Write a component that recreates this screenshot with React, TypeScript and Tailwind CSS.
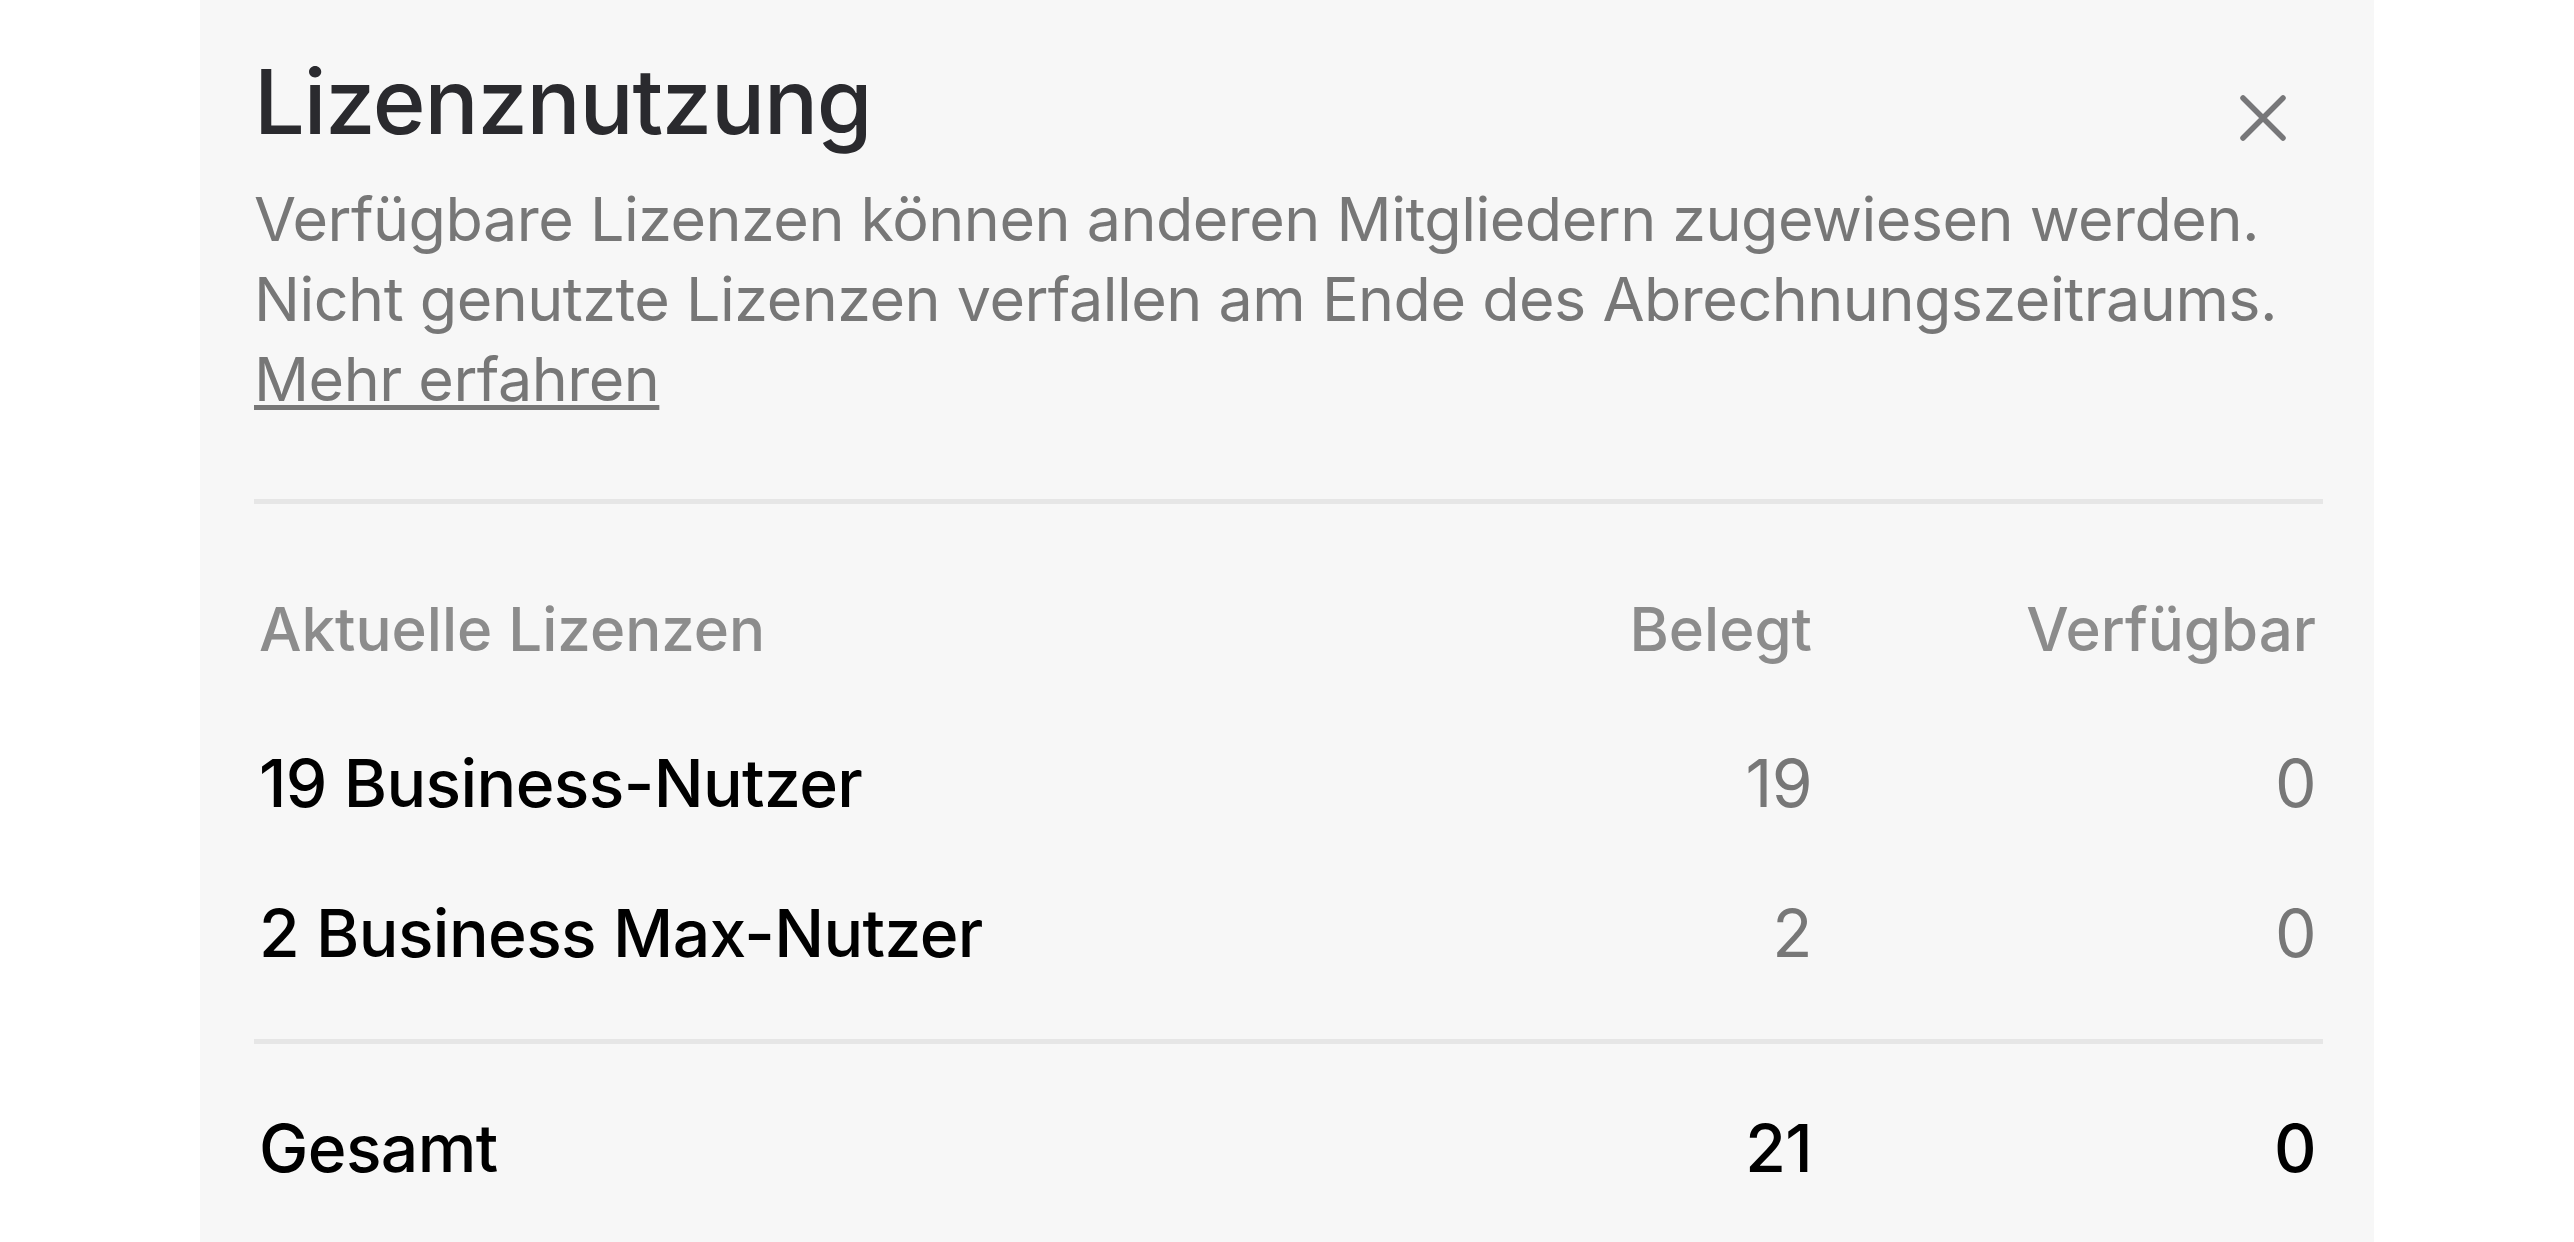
import React from 'react';

const rows = [
  { label: '19 Business-Nutzer', used: '19', free: '0' },
  { label: '2 Business Max-Nutzer', used: '2', free: '0' },
];

const CloseIcon: React.FC = () => (
  <svg width="46" height="46" viewBox="0 0 46 46" fill="none">
    <path d="M3 3L43 43M43 3L3 43" stroke="#777779" strokeWidth="5.5" strokeLinecap="round" />
  </svg>
);

const App: React.FC = () => {
  return (
    <div className="w-[2574px] h-[1242px] overflow-hidden bg-white font-['Inter',sans-serif]">
      <div className="ml-[200px] w-[2174px] h-full bg-[#f7f7f7] pt-[47px] pl-[54px] pr-[51px]">
        <div className="flex items-start justify-between">
          <h1 className="text-[90px] leading-[110px] font-medium text-[#2a2a2e] tracking-[-1.2px]">
            Lizenznutzung
          </h1>
          <button className="mt-[48px] mr-[37px]">
            <CloseIcon />
          </button>
        </div>

        <p className="mt-[22px] text-[61px] leading-[80px] text-[#777777] tracking-[-0.5px] whitespace-nowrap">
          Verfügbare Lizenzen können anderen Mitgliedern zugewiesen werden.
          <br />
          Nicht genutzte Lizenzen verfallen am Ende des Abrechnungszeitraums.
          <br />
          <a className="underline decoration-[5px] underline-offset-[4px]">Mehr erfahren</a>
        </p>

        <div className="mt-[80px] h-[5px] bg-[#e6e6e6]" />

        <div className="pl-[5px] pr-[7px]">
          <div className="mt-[84px] flex text-[60px] leading-[82px] font-medium text-[#8c8c8c]">
            <div className="flex-1">Aktuelle Lizenzen</div>
            <div className="text-right">Belegt</div>
            <div className="w-[504px] text-right">Verfügbar</div>
          </div>

          {rows.map((r, i) => (
            <div
              key={r.label}
              className={`flex text-[66px] leading-[82px] tracking-[-0.6px] ${i === 0 ? 'mt-[72px]' : 'mt-[68px]'}`}
            >
              <div className="flex-1 font-medium text-black">{r.label}</div>
              <div className="text-right text-[#777777]">{r.used}</div>
              <div className="w-[504px] text-right text-[#777777]">{r.free}</div>
            </div>
          ))}
        </div>

        <div className="mt-[65px] h-[5px] bg-[#e6e6e6]" />

        <div className="pl-[5px] pr-[7px]">
          <div className="mt-[63px] flex text-[66px] leading-[82px] tracking-[-0.6px] font-medium text-black">
            <div className="flex-1">Gesamt</div>
            <div className="text-right">21</div>
            <div className="w-[504px] text-right">0</div>
          </div>
        </div>
      </div>
    </div>
  );
};

export default App;
